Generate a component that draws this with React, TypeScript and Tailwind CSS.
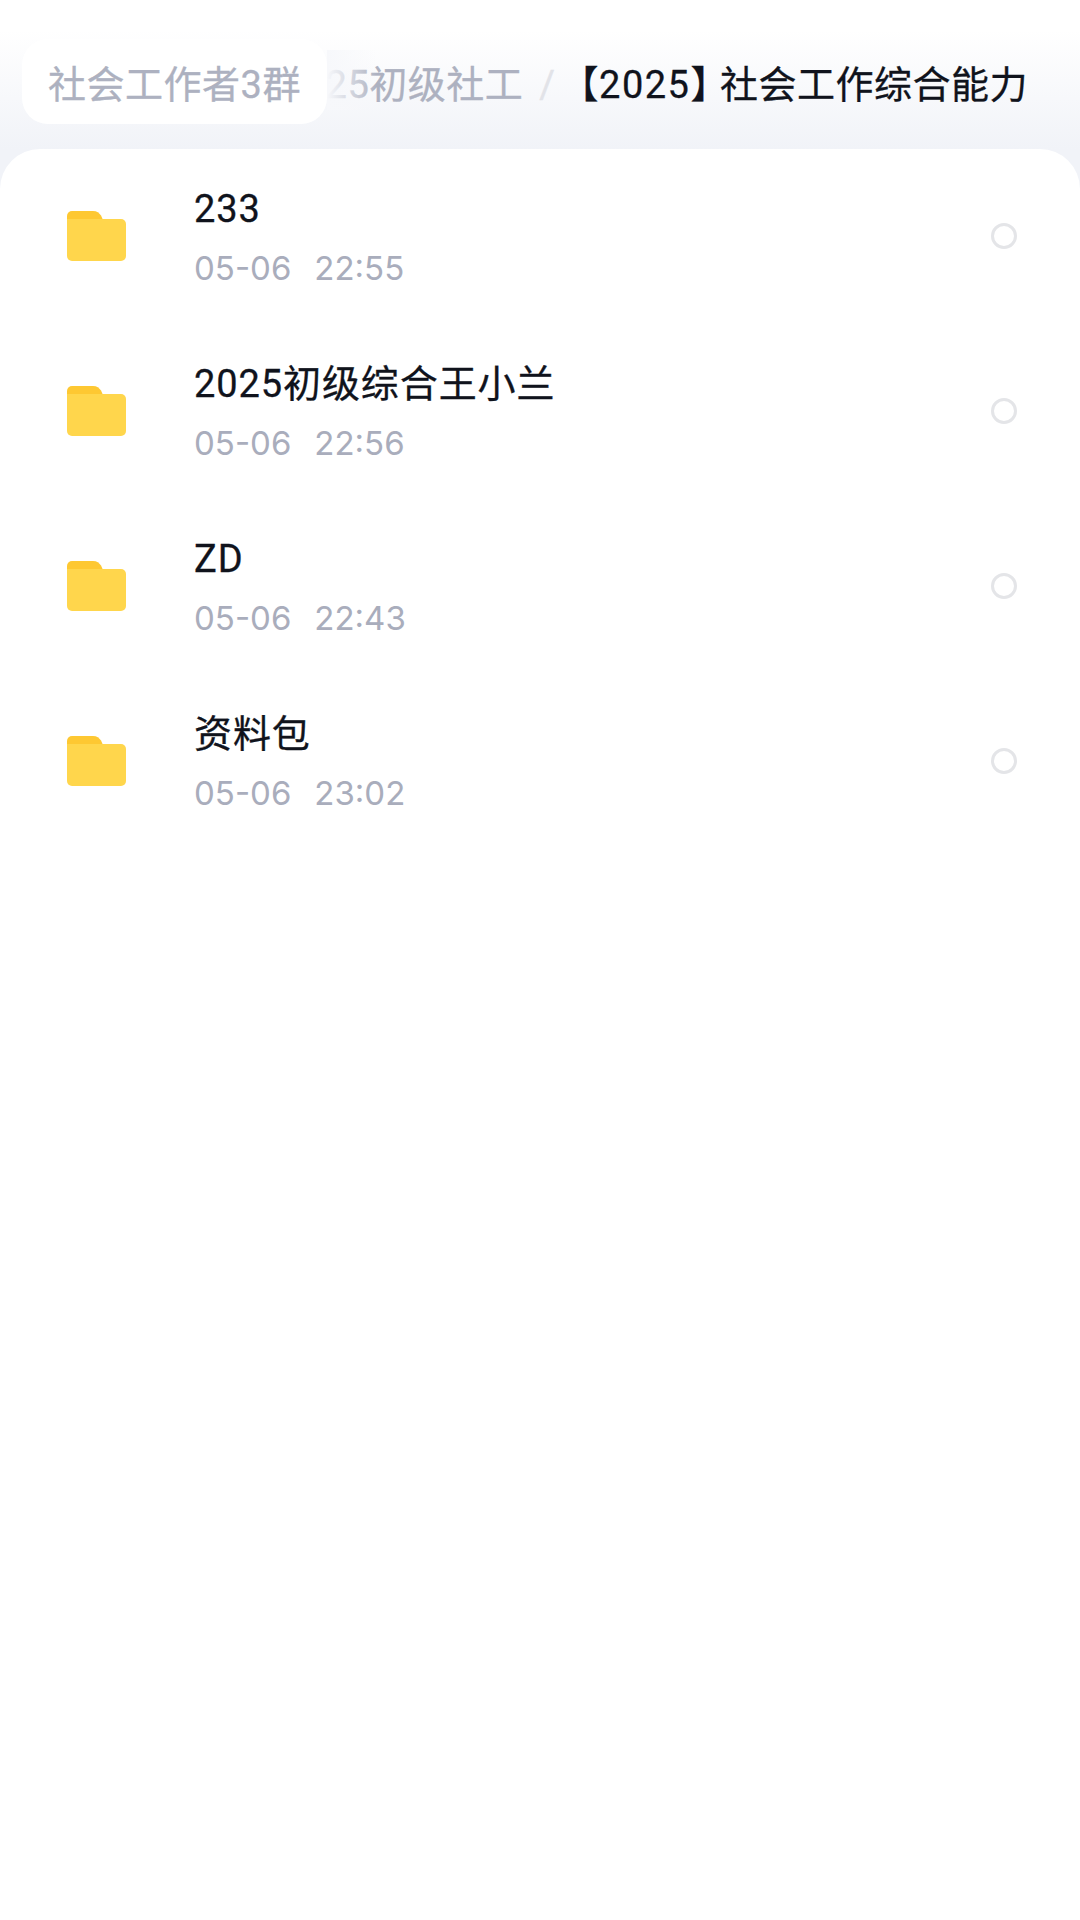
type Entry = { name: string; date: string; time: string };

const ENTRIES: Entry[] = [
  { name: "233", date: "05-06", time: "22:55" },
  { name: "2025初级综合王小兰", date: "05-06", time: "22:56" },
  { name: "ZD", date: "05-06", time: "22:43" },
  { name: "资料包", date: "05-06", time: "23:02" },
];

function FolderIcon() {
  return (
    <svg width="59" height="52" viewBox="0 0 59 52" className="mb-[2px] shrink-0">
      <path d="M0 6a5 5 0 0 1 5-5h21c4 0 6 2 8 4.500L36 10H0Z" fill="#fec832" />
      <path d="M0 9h28c3 0 4 0 7 0h19a5 5 0 0 1 5 5v32a5 5 0 0 1-5 5H5a5 5 0 0 1-5-5Z" fill="#ffd64c" />
    </svg>
  );
}

function Row({ entry }: { entry: Entry }) {
  return (
    <div className="flex h-[175px] items-center pl-[67px] pr-[63px]">
      <FolderIcon />
      <div className="ml-[68px] flex-1">
        <div className="text-[38px] leading-[50px] tracking-[0.9px] text-[#10131c] [-webkit-text-stroke:0.3px_#10131c]">{entry.name}</div>
        <div className="mt-[13px] flex gap-[23px] font-['Inter','Noto_Sans_CJK_SC',sans-serif] text-[33px] leading-[42px] text-[#a9adbc]">
          <span>{entry.date}</span>
          <span>{entry.time}</span>
        </div>
      </div>
      <span className="mb-[2px] h-[26px] w-[26px] rounded-full border-[3px] border-[#e4e5e8]" />
    </div>
  );
}

export default function App() {
  return (
    <div className="h-[1920px] w-[1080px] overflow-hidden bg-[linear-gradient(to_bottom,#ffffff_30px,#f1f3f8_149px)] font-['Roboto','Noto_Sans_CJK_SC',sans-serif]">
      <header className="relative h-[149px]">
        <div className="flex h-full items-center justify-end overflow-hidden whitespace-nowrap pr-[52px] pt-[22px] text-[38px] tracking-[0.5px] [-webkit-text-stroke:0.3px]">
          <span className="text-[#adb1c0]">2025初级社工</span>
          <span className="ml-[16px] text-[#e2e3e8]">/</span>
          <span className="ml-[24px] text-[#10131c] [font-feature-settings:'halt']">【</span>
          <span className="tracking-[1.5px] text-[#10131c]">2025</span>
          <span className="text-[#10131c] [font-feature-settings:'halt']">】</span>
          <span className="ml-[10px] text-[#10131c]">社会工作综合能力</span>
        </div>
        <div className="absolute left-[22px] top-[39px] flex h-[85px] w-[305px] items-center justify-center rounded-[26px] bg-white pt-[7px] text-[38px] tracking-[0.5px] text-[#adb1c0] [-webkit-text-stroke:0.3px]">
          社会工作者3群
        </div>
        <div className="absolute left-[327px] top-[50px] h-[60px] w-[50px] bg-gradient-to-r from-[#f7f8fb] to-transparent" />
      </header>
      <main className="h-[1771px] rounded-t-[40px] bg-white">
        {ENTRIES.map((entry) => (
          <Row key={entry.name} entry={entry} />
        ))}
      </main>
    </div>
  );
}
